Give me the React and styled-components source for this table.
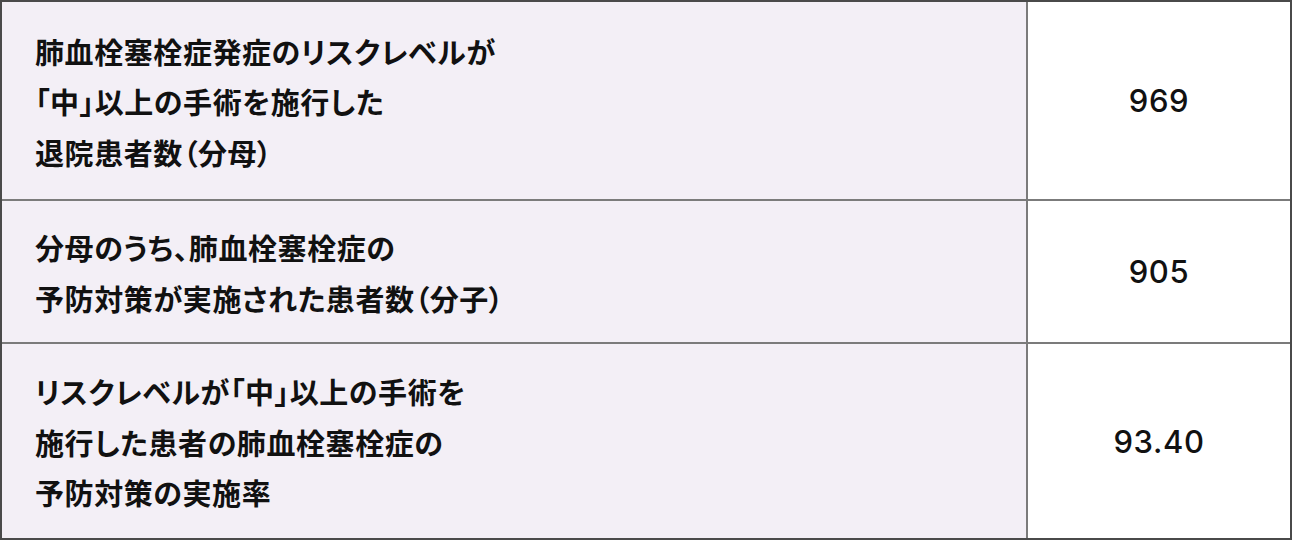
import React from "react";
import styled, { createGlobalStyle } from "styled-components";

const Global = createGlobalStyle`
  html, body { margin: 0; padding: 0; background: #ffffff; }
  #root { width: 1292px; height: 540px; }
`;

const Table = styled.div`
  box-sizing: border-box;
  width: 1292px;
  height: 540px;
  display: grid;
  grid-template-columns: 1024px 1fr;
  grid-template-rows: 197px 141px 1fr;
  gap: 2px;
  background: #7b7b7b;
  border: 2px solid #4a4a4a;
`;

const Label = styled.div`
  background: #f3eff6;
  display: flex;
  align-items: center;
  padding-left: 33px;
  padding-top: 2px;
  font-family: "Noto Sans CJK JP", "Noto Sans", sans-serif;
  font-weight: 700;
  font-size: 29px;
  line-height: 50.5px;
  letter-spacing: 0.02em;
  color: #111;
  font-feature-settings: "palt";
`;

const Value = styled.div`
  background: #ffffff;
  display: flex;
  align-items: center;
  justify-content: center;
  font-family: "Inter", "Noto Sans", sans-serif;
  font-weight: 500;
  font-size: 31px;
  letter-spacing: 0.02em;
  color: #111;
`;

const rows = [
  { lines: ["肺血栓塞栓症発症のリスクレベルが", "「中」以上の手術を施行した", "退院患者数（分母）"], value: "969" },
  { lines: ["分母のうち、肺血栓塞栓症の", "予防対策が実施された患者数（分子）"], value: "905" },
  { lines: ["リスクレベルが「中」以上の手術を", "施行した患者の肺血栓塞栓症の", "予防対策の実施率"], value: "93.40" },
];

export default function App() {
  return (
    <>
      <Global />
      <Table>
        {rows.map((r, i) => (
          <React.Fragment key={i}>
            <Label>
              <div>
                {r.lines.map((l, j) => (
                  <div key={j}>{l}</div>
                ))}
              </div>
            </Label>
            <Value>{r.value}</Value>
          </React.Fragment>
        ))}
      </Table>
    </>
  );
}
